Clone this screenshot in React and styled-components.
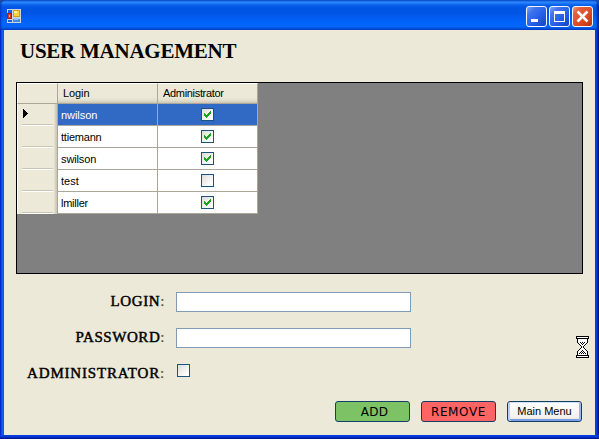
import React from "react";
import styled, { createGlobalStyle } from "styled-components";

const GlobalStyle = createGlobalStyle`
  *, *::before, *::after { box-sizing: border-box; }
  html, body { margin: 0; padding: 0; overflow: hidden; background: #1a4aa8; }
`;

const Window = styled.div`
  width: 599px;
  height: 439px;
  display: flex;
  flex-direction: column;
  overflow: hidden;
  border-radius: 7px 7px 0 0;
  background: #0831d9;
  color: #000;
  font-family: "Liberation Sans", Arial, sans-serif;
`;

const TitleBar = styled.header`
  height: 30px;
  flex: none;
  display: flex;
  align-items: center;
  justify-content: space-between;
  padding: 3px 6px 0 7px;
  background: linear-gradient(
    to bottom,
    #0646c8 0, #2a86fa 2px, #2380f8 3px, #0860ea 5px, #0054e3 8px,
    #0055e5 14px, #025cf2 18px, #0266fc 24px, #0263f8 27px, #0049d0 29px, #003cc0 30px
  );
  box-shadow: inset 3px 0 2px -2px #0033b8, inset -3px 0 2px -1px #0026a8;
`;

const WindowControls = styled.div`
  display: flex;
  gap: 2px;
`;

const ControlButton = styled.button`
  width: 21px;
  height: 21px;
  padding: 0;
  display: block;
  border: 1px solid #f4f7ff;
  border-radius: 3px;
  background: ${(p) =>
    p.$danger
      ? "linear-gradient(135deg, #eb9c83 0, #e25f3c 22%, #dc4c24 60%, #b73310 100%)"
      : "linear-gradient(135deg, #7ba5f7 0, #3e73ee 25%, #245fe8 60%, #1443c0 100%)"};
  svg { display: block; }
`;

const Frame = styled.div`
  flex: 1;
  display: flex;
  padding: 0 4px 4px;
  background:
    linear-gradient(to bottom, #0540e6 0, #0836dc 2px, #001c9c 3px, #00138c 4px) bottom / 100% 4px no-repeat,
    linear-gradient(to right, #0019cf 0, #0831d9 1px, #1466f0 2px, #0855dd 4px) left / 4px 100% no-repeat,
    linear-gradient(to right, #0540e6 0, #0836dc 2px, #001c9c 3px, #00138c 4px) right / 4px 100% no-repeat;
`;

const Client = styled.main`
  flex: 1;
  display: flex;
  flex-direction: column;
  padding: 9px 12px 0;
  background: #ece9d8;
`;

const Heading = styled.h1`
  margin: 0 0 0 4px;
  height: 43px;
  font: bold 21px/24px "Liberation Serif", "Times New Roman", serif;
  letter-spacing: -0.25px;
  white-space: nowrap;
`;

const GridView = styled.section`
  width: 567px;
  height: 192px;
  flex: none;
  border: 1px solid #000;
  background: #808080;
`;

const Row = styled.div`
  display: grid;
  grid-template-columns: 41px 100px 100px;
  grid-template-rows: 100%;
  width: 241px;
  height: ${(p) => (p.$header ? 21 : 22)}px;
  font-size: 11px;
  line-height: ${(p) => (p.$header ? 18 : 19)}px;
`;

const HeaderCell = styled.div`
  padding-left: 5px;
  border-right: 1px solid #aca899;
  border-bottom: 1px solid #aca899;
  border-top: 1px solid #fff;
  background: linear-gradient(to bottom, #ece9d8 0, #ebe8d8 14px, #dedac8 17px, #cbc7b8 19px);
  letter-spacing: ${(p) => p.$track || 0}px;
  white-space: nowrap;
`;

const CornerCell = styled(HeaderCell)`
  border-left: 1px solid #fff;
  background: #ece9d8;
`;

const RowHeader = styled.div`
  display: flex;
  flex-direction: column;
  padding: 5px 4px 0 4px;
  border-left: 1px solid #fff;
  border-right: 1px solid #aca899;
  background: linear-gradient(to right, #ece9d8 36px, #d8d4c3 37px, #c9c5b5 39px);
  svg { display: block; margin-left: 1px; }
  &::after {
    content: "";
    margin-top: auto;
    height: 2px;
    border-top: 1px solid #c9c5b4;
    border-bottom: 1px solid #fff;
  }
`;

const Cell = styled.div`
  display: flex;
  align-items: center;
  justify-content: ${(p) => (p.$center ? "center" : "flex-start")};
  padding: ${(p) => (p.$center ? "0" : "2px 0 0 3px")};
  border-right: 1px solid #aca899;
  border-bottom: 1px solid #aca899;
  background: ${(p) => (p.$selected ? "#316ac5" : "#fff")};
  color: ${(p) => (p.$selected ? "#fff" : "#000")};
  letter-spacing: ${(p) => p.$track || 0}px;
`;

const CheckFrame = styled.span`
  width: 13px;
  height: 13px;
  flex: none;
  display: block;
  border: 1px solid #1c5180;
  background: linear-gradient(135deg, #dcdcd7, #fff 85%);
  svg { display: block; }
`;

const Form = styled.form`
  display: grid;
  grid-template-columns: 149px 235px;
  grid-template-rows: 20px 20px 20px;
  row-gap: 16px;
  column-gap: 11px;
  margin-top: 18px;
`;

const Label = styled.label`
  justify-self: end;
  font: 15px/19px "Liberation Serif", "Times New Roman", serif;
  -webkit-text-stroke: 0.45px #000;
  letter-spacing: ${(p) => p.$track}px;
  white-space: nowrap;
`;

const Colon = styled.span`
  color: #55534c;
  -webkit-text-stroke: 0.3px #55534c;
`;

const TextField = styled.input`
  width: 235px;
  height: 20px;
  padding: 0 3px;
  border: 1px solid #7f9db9;
  border-radius: 0;
  outline: none;
  background: #fff;
`;

const CheckSlot = styled.div`
  padding: 0 0 0 1px;
`;

const Actions = styled.footer`
  display: flex;
  justify-content: flex-end;
  gap: 11px;
  margin: 17px 1px 0 0;
`;

const sansUi = '11px/19px "Liberation Sans", Arial, sans-serif';
const wideUi = '12px/19px "DejaVu Sans", Verdana, sans-serif';

const tones = {
  add: ["#7dc264", "none", wideUi, "1px 0 0 4px"],
  remove: ["#ff6464", "none", wideUi, "1px 0 0"],
  plain: [
    "linear-gradient(to bottom, #fff, #f2f1ec 80%, #dedbd0)",
    "inset 0 1px #cee0fb, inset 2px 0 #b9d0f5, inset -2px 0 #98b5ec, inset 0 -2px #7b9ce2",
    sansUi,
    "0",
  ],
};

const ActionButton = styled.button`
  width: 75px;
  height: 21px;
  padding: ${(p) => tones[p.$tone][3]};
  border: 1px solid #123f66;
  border-radius: 3px;
  background: ${(p) => tones[p.$tone][0]};
  box-shadow: ${(p) => tones[p.$tone][1]};
  color: #000;
  font: ${(p) => tones[p.$tone][2]};
  letter-spacing: ${(p) => p.$track || 0}px;
  white-space: nowrap;
`;

const BusyCursor = styled.div`
  position: absolute;
  left: 576px;
  top: 336px;
  svg { display: block; }
`;

function CheckBox({ checked }) {
  return (
    <CheckFrame>
      {checked && (
        <svg width="11" height="11" viewBox="0 0 11 11" shapeRendering="crispEdges">
          <path
            fill="#21a121"
            d="M2 4h1v3h-1zM3 5h1v3h-1zM4 6h1v3h-1zM5 5h1v3h-1zM6 4h1v3h-1zM7 3h1v3h-1zM8 2h1v3h-1z"
          />
        </svg>
      )}
    </CheckFrame>
  );
}

const IconSlot = styled.span`
  height: 15px;
  svg { display: block; }
`;

function FormIcon() {
  return (
    <IconSlot>
      <svg width="14" height="14" viewBox="0 0 14 14" shapeRendering="crispEdges">
        <path fill="#c9d5df" d="M0 0h14v14H0z" />
        <path fill="#1762d8" d="M1 1h4v3H1zM1 11h4v2H1z" />
        <path fill="#a91b12" d="M0 4h5v6H0z" />
        <path fill="#d63c2a" d="M1 5h3v4H1z" />
        <path fill="#f5a198" d="M2 6h1v2H2z" />
        <path fill="#d99a17" d="M6 1h7v7H6z" />
        <path fill="#ffd243" d="M7 2h5v5H7z" />
        <path fill="#fff2a5" d="M7 2h3v2H7z" />
        <path fill="#4287e8" d="M6 10h7v3H6z" />
        <path fill="#9bc5fa" d="M7 9h4v2H7z" />
      </svg>
    </IconSlot>
  );
}

function Hourglass() {
  return (
    <svg width="13" height="22" viewBox="0 0 13 22" shapeRendering="crispEdges">
      <path fill="#fff" d="M2 2h9v4h-1v2h-1v1h-1v1h-1v2h1v1h1v1h1v2h1v4H2v-4h1v-2h1v-1h1v-1h1v-2H5V9H4V8H3V6H2z" />
      <path d="M0 0h13v1H0zM0 1h1v2H0zM12 1h1v2h-1zM0 19h1v3H0zM12 19h1v3h-1zM0 21h13v1H0z" />
      <path fill="#fff" d="M1 1h11v1H1zM1 20h11v1H1z" />
      <path d="M1 2h11v1H1zM1 19h11v1H1z" />
      <path d="M1 3h1v4H1zM11 3h1v4h-1zM2 7h1v1H2zM10 7h1v1h-1zM3 8h1v1H3zM9 8h1v1H9zM4 9h1v1H4zM8 9h1v1H8zM5 10h1v2H5zM7 10h1v2H7zM4 12h1v1H4zM8 12h1v1H8zM3 13h1v1H3zM9 13h1v1H9zM2 14h1v1H2zM10 14h1v1h-1zM1 15h1v4H1zM11 15h1v4h-1z" />
      <path d="M4 6h1v1H4zM6 6h1v1H6zM8 6h1v1H8zM5 7h1v1H5zM7 7h1v1H7zM6 8h1v1H6zM6 14h1v1H6zM5 15h1v1H5zM7 15h1v1H7zM4 16h1v1H4zM6 16h1v1H6zM8 16h1v1H8zM3 17h1v1H3zM5 17h1v1H5zM7 17h1v1H7zM9 17h1v1H9z" />
    </svg>
  );
}

const users = [
  { login: "nwilson", admin: true, track: -0.05 },
  { login: "ttiemann", admin: true, track: -0.22 },
  { login: "swilson", admin: true, track: -0.12 },
  { login: "test", admin: false, track: 0 },
  { login: "lmiller", admin: true, track: -0.25 },
];

export default function App() {
  return (
    <>
      <GlobalStyle />
      <Window>
        <TitleBar>
          <FormIcon />
          <WindowControls>
            <ControlButton aria-label="Minimize">
              <svg width="19" height="19"><path fill="#fff" d="M4 12h7v3H4z" /></svg>
            </ControlButton>
            <ControlButton aria-label="Maximize">
              <svg width="19" height="19"><path fill="#fff" fillRule="evenodd" d="M4 4h11v11H4zM5 7v7h9V7z" /></svg>
            </ControlButton>
            <ControlButton aria-label="Close" $danger>
              <svg width="19" height="19"><path stroke="#fff" strokeWidth="2.5" d="M4.5 4.5l10 10M14.5 4.5l-10 10" /></svg>
            </ControlButton>
          </WindowControls>
        </TitleBar>
        <Frame>
          <Client>
            <Heading>USER MANAGEMENT</Heading>
            <GridView>
              <Row $header>
                <CornerCell />
                <HeaderCell $track={-0.1}>Login</HeaderCell>
                <HeaderCell $track={-0.32}>Administrator</HeaderCell>
              </Row>
              {users.map((u, i) => (
                <Row key={u.login}>
                  <RowHeader>
                    {i === 0 && (
                      <svg width="5" height="9" viewBox="0 0 5 9" shapeRendering="crispEdges">
                        <path d="M0 0h1v9H0zM1 1h1v7H1zM2 2h1v5H2zM3 3h1v3H3zM4 4h1v1H4z" />
                      </svg>
                    )}
                  </RowHeader>
                  <Cell $selected={i === 0} $track={u.track}>{u.login}</Cell>
                  <Cell $selected={i === 0} $center><CheckBox checked={u.admin} /></Cell>
                </Row>
              ))}
            </GridView>
            <Form>
              <Label $track={0.6}>LOGIN<Colon>:</Colon></Label>
              <TextField />
              <Label $track={0.55}>PASSWORD<Colon>:</Colon></Label>
              <TextField />
              <Label $track={0.82}>ADMINISTRATOR<Colon>:</Colon></Label>
              <CheckSlot><CheckBox /></CheckSlot>
            </Form>
            <Actions>
              <ActionButton $tone="add" $track={0.2}>ADD</ActionButton>
              <ActionButton $tone="remove" $track={0.65}>REMOVE</ActionButton>
              <ActionButton $tone="plain">Main Menu</ActionButton>
            </Actions>
          </Client>
        </Frame>
        <BusyCursor><Hourglass /></BusyCursor>
      </Window>
    </>
  );
}
